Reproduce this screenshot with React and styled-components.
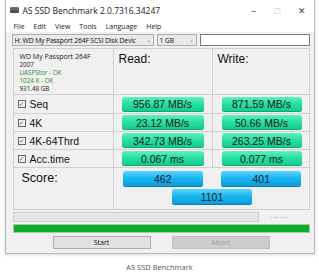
import React from 'react';
import styled, { createGlobalStyle } from 'styled-components';

const Global = createGlobalStyle`
  html, body { margin: 0; padding: 0; background: #fff; }
  body { font-family: "Segoe UI", "Open Sans", "Liberation Sans", sans-serif; }
`;

const Page = styled.div`
  width: 319px;
  height: 273px;
  display: flex;
  flex-direction: column;
  align-items: center;
  background: #fff;
`;

const Window = styled.div`
  width: 308px;
  height: 253px;
  border: 1px solid #b9b9b9;
  border-top: none;
  background: #f0f0f0;
  display: flex;
  flex-direction: column;
  box-shadow: 0 1px 3px rgba(0,0,0,0.15);
`;

const TitleBar = styled.div`
  height: 20px;
  background: #fff;
  display: flex;
  align-items: center;
  padding-left: 4px;
  font-size: 8.5px;
  color: #222;
`;

const AppIcon = styled.span`
  width: 9px;
  height: 6px;
  background: linear-gradient(#777, #444);
  margin-right: 4px;
  border-radius: 1px;
`;

const TitleText = styled.span`
  flex: 1;
`;

const WinBtn = styled.span`
  width: 24px;
  text-align: center;
  color: ${p => (p.dim ? '#bbb' : '#444')};
  font-size: 9px;
`;

const MenuBar = styled.div`
  height: 12px;
  background: #fff;
  display: flex;
  align-items: center;
  padding-left: 8px;
  gap: 9px;
  font-size: 7px;
  color: #222;
`;

const Toolbar = styled.div`
  display: flex;
  gap: 3px;
  padding: 2px 4px 0 6px;
  height: 12px;
  align-items: stretch;
`;

const Select = styled.div`
  width: ${p => p.w}px;
  border: 1px solid #adadad;
  background: #e9e9e9;
  font-size: 6.8px;
  letter-spacing: -0.15px;
  display: flex;
  align-items: center;
  padding: 0 2px;
  box-sizing: border-box;
  white-space: nowrap;
  overflow: hidden;
  color: #111;
  span { flex: 1; overflow: hidden; }
  i { font-style: normal; color: #777; font-size: 6px; margin-left: 2px; }
`;

const Input = styled.div`
  flex: 1;
  border: 1px solid #7a7a7a;
  background: #fff;
`;

const Grid = styled.div`
  margin: 2px 4px 0 7px;
  display: grid;
  grid-template-columns: 100px 99px 98px;
  grid-template-rows: 46px 19px 18px 18px 18px 41px;
  border: 1px solid #d0d0d0;
  background: #f0f0f0;
`;

const Cell = styled.div`
  border-right: ${p => (p.last ? 'none' : '1px solid #d0d0d0')};
  border-bottom: 1px solid #d0d0d0;
  display: flex;
  align-items: center;
  justify-content: ${p => (p.center ? 'center' : 'flex-start')};
  box-sizing: border-box;
`;

const Info = styled(Cell)`
  flex-direction: column;
  align-items: flex-start;
  justify-content: flex-start;
  padding: 3px 0 0 6px;
  font-size: 6.3px;
  line-height: 8px;
  color: #222;
`;

const Green = styled.div`
  color: #2e8b2e;
`;

const InfoTitle = styled.div`
  font-size: 7px;
  line-height: 9px;
`;

const Head = styled(Cell)`
  align-items: flex-start;
  padding: 3px 0 0 5px;
  font-size: 12px;
  color: #111;
  font-family: "Liberation Sans", Arial, sans-serif;
`;

const Label = styled(Cell)`
  padding-left: 4px;
  font-size: 10.5px;
  font-family: "Liberation Sans", Arial, sans-serif;
  color: #111;
  gap: 4px;
`;

const Check = styled.span`
  width: 6px;
  height: 6px;
  border: 1px solid #666;
  font-size: 6px;
  line-height: 6px;
  text-align: center;
  color: #444;
`;

const Value = styled.div`
  width: ${p => p.w || 82}px;
  height: ${p => (p.blue ? 16 : 15)}px;
  border-radius: 3px;
  background: ${p =>
    p.blue
      ? 'linear-gradient(#5fd2ff 0%, #19b6f0 45%, #0a9ad8 100%)'
      : 'linear-gradient(#60f0c0 0%, #27e0a4 45%, #15c889 100%)'};
  box-shadow: inset 0 -1px 0 ${p => (p.blue ? '#0780b8' : '#10a874')};
  font-family: "Liberation Sans", Arial, sans-serif;
  font-size: 10.5px;
  color: #1a1a1a;
  display: flex;
  align-items: center;
  justify-content: center;
`;

const ScoreLabel = styled(Cell)`
  align-items: flex-start;
  padding: 3px 0 0 8px;
  font-size: 12.5px;
  font-family: "Liberation Sans", Arial, sans-serif;
  color: #111;
  border-bottom: none;
`;

const ScoreArea = styled.div`
  grid-column: 2 / 4;
  display: grid;
  grid-template-columns: 1fr 1fr;
  grid-template-rows: 18px 16px;
  justify-items: center;
  padding-top: 3px;
`;

const Total = styled.div`
  grid-column: 1 / 3;
  justify-self: center;
`;

const ProgressRow = styled.div`
  display: flex;
  align-items: center;
  margin: 2px 4px 0 7px;
  gap: 12px;
`;

const Track = styled.div`
  width: 244px;
  height: 8px;
  border: 1px solid #cfcfcf;
  background: #e6e6e6;
`;

const Time = styled.span`
  font-size: 6px;
  color: #888;
  letter-spacing: 0.5px;
`;

const GreenBar = styled.div`
  margin: 2px 4px 0 7px;
  height: 7px;
  background: #06b025;
  border: 1px solid #bcbcbc;
`;

const Buttons = styled.div`
  display: flex;
  justify-content: center;
  gap: 21px;
  margin-top: 3px;
  padding-left: 3px;
`;

const Button = styled.div`
  width: 96px;
  height: 11px;
  border: 1px solid ${p => (p.disabled ? '#bfbfbf' : '#adadad')};
  background: ${p => (p.disabled ? '#cccccc' : '#e1e1e1')};
  color: ${p => (p.disabled ? '#a0a0a0' : '#111')};
  font-size: 7px;
  display: flex;
  align-items: center;
  justify-content: center;
`;

const Caption = styled.div`
  margin-top: 8px;
  font-size: 7.5px;
  color: #555;
`;

const rows = [
  ['Seq', '956.87 MB/s', '871.59 MB/s'],
  ['4K', '23.12 MB/s', '50.66 MB/s'],
  ['4K-64Thrd', '342.73 MB/s', '263.25 MB/s'],
  ['Acc.time', '0.067 ms', '0.077 ms'],
];

export default function App() {
  return (
    <Page>
      <Global />
      <Window>
        <TitleBar>
          <AppIcon />
          <TitleText>AS SSD Benchmark 2.0.7316.34247</TitleText>
          <WinBtn>–</WinBtn>
          <WinBtn dim>□</WinBtn>
          <WinBtn>✕</WinBtn>
        </TitleBar>
        <MenuBar>
          <span>File</span>
          <span>Edit</span>
          <span>View</span>
          <span>Tools</span>
          <span>Language</span>
          <span>Help</span>
        </MenuBar>
        <Toolbar>
          <Select w={142}>
            <span>H: WD My Passport 264F SCSI Disk Devic</span>
            <i>⌄</i>
          </Select>
          <Select w={40}>
            <span>1 GB</span>
            <i>⌄</i>
          </Select>
          <Input />
        </Toolbar>
        <Grid>
          <Info>
            <InfoTitle>WD My Passport 264F</InfoTitle>
            <div>2007</div>
            <Green>UASPStor - OK</Green>
            <Green>1024 K - OK</Green>
            <div>931.48 GB</div>
          </Info>
          <Head>Read:</Head>
          <Head last>Write:</Head>
          {rows.map(([name, r, w]) => (
            <React.Fragment key={name}>
              <Label>
                <Check>✓</Check>
                {name}
              </Label>
              <Cell center>
                <Value>{r}</Value>
              </Cell>
              <Cell center last>
                <Value w={80}>{w}</Value>
              </Cell>
            </React.Fragment>
          ))}
          <ScoreLabel>Score:</ScoreLabel>
          <ScoreArea>
            <Value blue w={80}>462</Value>
            <Value blue w={80}>401</Value>
            <Total>
              <Value blue w={80}>1101</Value>
            </Total>
          </ScoreArea>
        </Grid>
        <ProgressRow>
          <Track />
          <Time>--:--:--</Time>
        </ProgressRow>
        <GreenBar />
        <Buttons>
          <Button>Start</Button>
          <Button disabled>Abort</Button>
        </Buttons>
      </Window>
      <Caption>AS SSD Benchmark</Caption>
    </Page>
  );
}
